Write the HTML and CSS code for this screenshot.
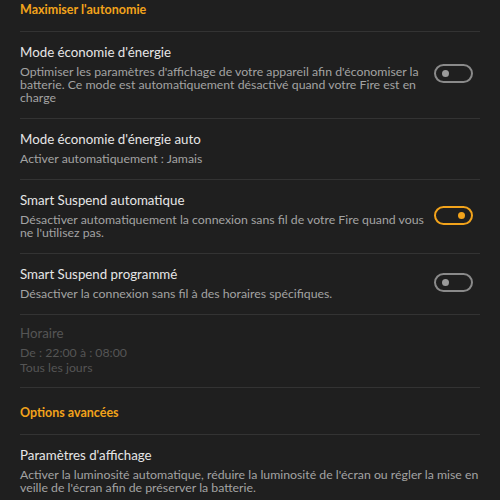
FILE: index.html
```html
<!DOCTYPE html>
<html lang="fr">
<head>
  <meta charset="UTF-8" />
  <title>Autonomie</title>
  <link rel="stylesheet" href="styles.css">
</head>
<body>
  <div class="liste">
    <div class="entete premier">Maximiser l'autonomie</div>

    <div class="ligne">
      <div class="texte">
        <div class="titre">Mode économie d'énergie</div>
        <div class="desc">Optimiser les paramètres d'affichage de votre appareil afin d'économiser la batterie. Ce mode est automatiquement désactivé quand votre Fire est en charge</div>
      </div>
      <div class="bascule"><span class="point"></span></div>
    </div>

    <div class="ligne">
      <div class="texte">
        <div class="titre">Mode économie d'énergie auto</div>
        <div class="desc">Activer automatiquement : Jamais</div>
      </div>
    </div>

    <div class="ligne">
      <div class="texte">
        <div class="titre">Smart Suspend automatique</div>
        <div class="desc">Désactiver automatiquement la connexion sans fil de votre Fire quand vous ne l'utilisez pas.</div>
      </div>
      <div class="bascule actif"><span class="point"></span></div>
    </div>

    <div class="ligne">
      <div class="texte">
        <div class="titre">Smart Suspend programmé</div>
        <div class="desc">Désactiver la connexion sans fil à des horaires spécifiques.</div>
      </div>
      <div class="bascule"><span class="point"></span></div>
    </div>

    <div class="ligne inactif">
      <div class="texte">
        <div class="titre">Horaire</div>
        <div class="desc">De : 22:00 à : 08:00</div>
        <div class="desc">Tous les jours</div>
      </div>
    </div>

    <div class="entete">Options avancées</div>

    <div class="ligne">
      <div class="texte">
        <div class="titre">Paramètres d'affichage</div>
        <div class="desc">Activer la luminosité automatique, réduire la luminosité de l'écran ou régler la mise en veille de l'écran afin de préserver la batterie.</div>
      </div>
    </div>
  </div>
</body>
</html>
```

FILE: styles.css
```css
html, body {
  margin: 0;
  background-color: #1f1f1f;
}
body {
  font-family: Lato, "Noto Sans", Arial, sans-serif;
  height: 500px;
  overflow: hidden;
}
.liste {
  padding: 0 20px;
}
.entete {
  color: #f2a31b;
  font-size: 12.5px;
  font-weight: bold;
  line-height: 18px;
  padding: 16px 0 12px;
  border-top: 1px solid #333;
}
.entete.premier {
  border-top: none;
  padding-top: 1px;
}
.ligne {
  display: flex;
  align-items: center;
  border-top: 1px solid #333;
  padding: 11px 0 14px;
}
.texte {
  flex: 1;
}
.titre {
  color: #e6e6e6;
  font-size: 13.3px;
  line-height: 18px;
  margin-bottom: 4px;
}
.desc {
  color: #a3a3a3;
  font-size: 12.3px;
  line-height: 13px;
}
.inactif {
  padding: 9px 0 12px;
}
.inactif .titre {
  margin-bottom: 3px;
}
.inactif .titre,
.inactif .desc {
  color: #555;
}
.inactif .desc {
  line-height: 15px;
}
.bascule {
  flex: none;
  width: 35px;
  height: 15px;
  border: 2px solid #8a8a8a;
  border-radius: 10px;
  margin: 0 7px 0 3px;
  display: flex;
  align-items: center;
}
.point {
  width: 7px;
  height: 7px;
  border-radius: 50%;
  background-color: #9a9a9a;
  margin-left: 6px;
}
.bascule.actif {
  border-color: #f2a31b;
  justify-content: flex-end;
}
.bascule.actif .point {
  background-color: #f2a31b;
  margin-left: 0;
  margin-right: 6px;
}
```
